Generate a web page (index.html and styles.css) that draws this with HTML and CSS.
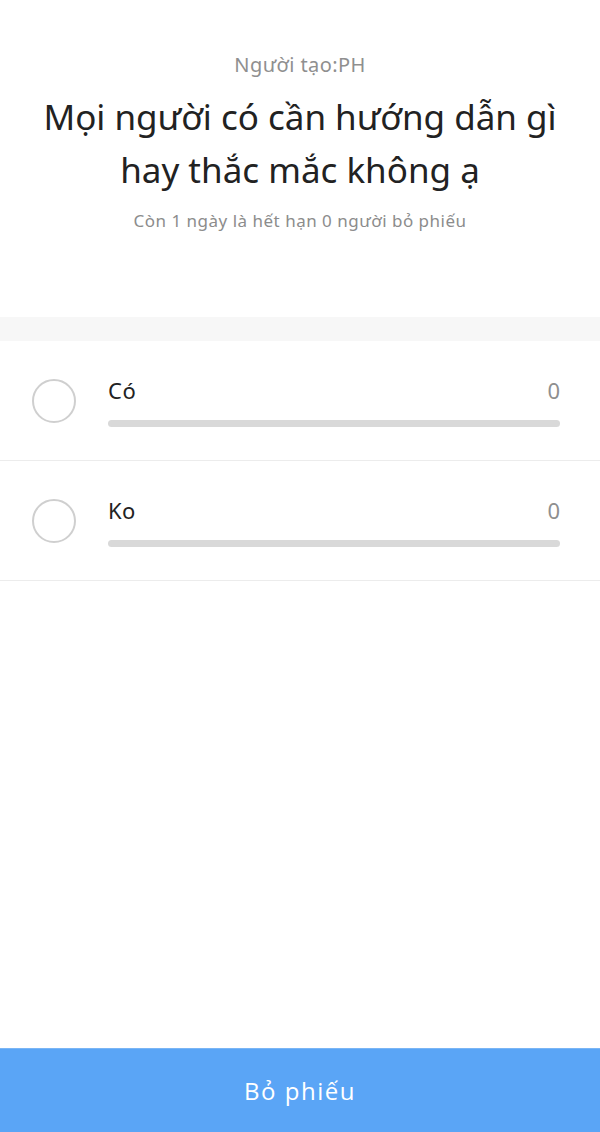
FILE: index.html
```html
<!DOCTYPE html>
<html lang="vi">
<head>
<meta charset="utf-8">
<link rel="stylesheet" href="styles.css">
</head>
<body>
<div class="page">
  <header class="head">
    <div class="creator">Người tạo:PH</div>
    <h1 class="title">Mọi người có cần hướng dẫn gì hay thắc mắc không ạ</h1>
    <div class="meta">Còn 1 ngày là hết hạn 0 người bỏ phiếu</div>
  </header>
  <div class="band"></div>
  <ul class="options">
    <li class="option">
      <span class="radio"></span>
      <div class="body">
        <div class="line"><span class="label">Có</span><span class="count">0</span></div>
        <div class="bar"></div>
      </div>
    </li>
    <li class="option">
      <span class="radio"></span>
      <div class="body">
        <div class="line"><span class="label">Ko</span><span class="count">0</span></div>
        <div class="bar"></div>
      </div>
    </li>
  </ul>
  <button class="vote">Bỏ phiếu</button>
</div>
</body>
</html>
```
FILE: styles.css
```css
* { box-sizing: border-box; }
html, body { margin: 0; padding: 0; background: #fff; }
body { font-family: "Noto Sans", "Open Sans", sans-serif; }
.page { min-height: 100vh; display: flex; flex-direction: column; }
.head { text-align: center; padding: 52px 20px 0; height: 317px; }
.creator { font-size: 20px; line-height: 26px; color: #8f8f8f; letter-spacing: 0.4px; }
.title { margin: 12px auto 0; font-size: 35px; line-height: 53px; font-weight: 400; color: #222; max-width: 560px; }
.meta { margin-top: 13px; font-size: 17px; line-height: 24px; color: #8c8c8c; letter-spacing: 0.5px; }
.band { height: 24px; background: #f7f7f7; }
.options { list-style: none; margin: 0; padding: 0; }
.option { height: 120px; border-bottom: 1px solid #ececec; display: flex; align-items: center; padding: 0 40px 0 32px; gap: 32px; }
.radio { width: 44px; height: 44px; border: 2.5px solid #cfcfcf; border-radius: 50%; flex: none; }
.body { flex: 1; padding-top: 2px; }
.line { display: flex; justify-content: space-between; align-items: center; height: 26px; }
.label { font-size: 22px; color: #222; letter-spacing: 0.5px; }
.count { font-size: 22px; color: #8f8f8f; }
.bar { margin-top: 17px; height: 7px; border-radius: 4px; background: #d9d9d9; }
.vote { margin-top: auto; height: 84px; width: 100%; border: none; border-top: 1px solid #7ab5f5; background: #5aa5f6; color: #fff; font-family: "Open Sans", "Noto Sans", sans-serif; font-size: 24px; letter-spacing: 1.5px; }
```
